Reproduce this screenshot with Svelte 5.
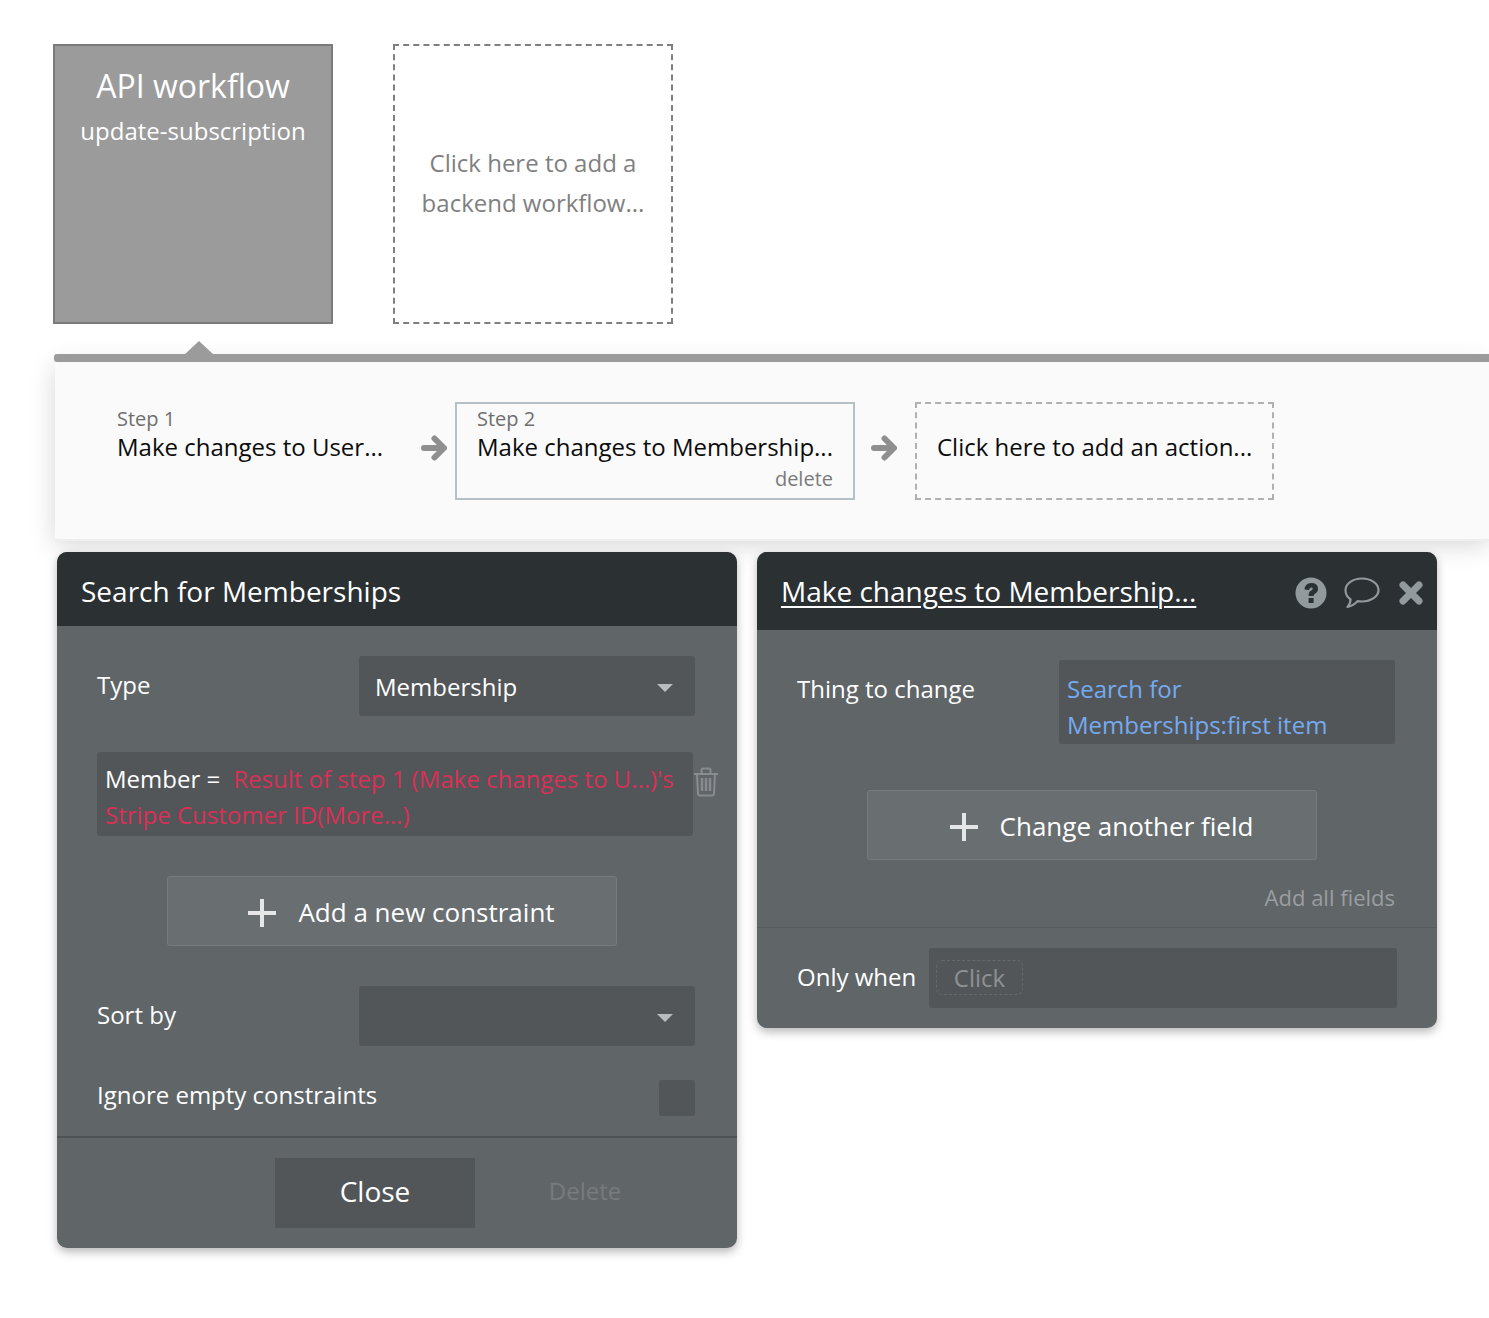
<script>
	const steps = [
		{ id: 1, label: 'Step 1', name: 'Make changes to User...' },
		{ id: 2, label: 'Step 2', name: 'Make changes to Membership...', selected: true }
	];
</script>

{#snippet plus()}
	<svg class="plus" width="28" height="28" viewBox="0 0 28 28"><path d="M12 0h4v12h12v4H16v12h-4V16H0v-4h12z" fill="#e4e6e7" /></svg>
{/snippet}

{#snippet arrow()}
	<svg class="arrow" width="26" height="28" viewBox="0 0 26 28">
		<path d="M3 14H22M13.500 4.500L23 14l-9.500 9.500" fill="none" stroke="#8f8f8f" stroke-width="6" stroke-linecap="round" stroke-linejoin="round" />
	</svg>
{/snippet}

{#snippet caret()}
	<span class="caret"></span>
{/snippet}

<div class="page">
	<div class="cards">
		<div class="card current">
			<div class="card-title">API workflow</div>
			<div class="card-sub">update-subscription</div>
		</div>
		<div class="card add">Click here to add a<br />backend workflow...</div>
	</div>

	<div class="strip">
		<span class="bar"></span>
		<span class="notch"></span>
		{#each steps as s}
			<div class="step" class:selected={s.selected}>
				<div class="step-label">{s.label}</div>
				<div class="step-name">{s.name}</div>
				{#if s.selected}<div class="step-del">delete</div>{/if}
			</div>
			{@render arrow()}
		{/each}
		<div class="step-add">Click here to add an action...</div>
	</div>

	<div class="panels">
		<section class="panel search">
			<header class="head short"><span class="title">Search for Memberships</span></header>
			<div class="row type-row">
				<span class="lbl">Type</span>
				<div class="select">Membership{@render caret()}</div>
			</div>
			<div class="constraint-wrap">
				<div class="constraint">
					<span class="member">Member =</span><span class="red">Result of step 1 (Make changes to U...)'s</span><br />
					<span class="red">Stripe Customer ID(More...)</span>
				</div>
				<svg class="trash" width="26" height="30" viewBox="0 0 26 30" fill="none" stroke="#878c8f" stroke-width="2">
					<path d="M1 7h24M4 7l1 19.500q.2 2 2 2h12q1.800 0 2-2L22 7M8.500 7V3.500q0-2 2-2h5q2 0 2 2V7" />
					<path d="M9 11v13M13 11v13M17 11v13" stroke-width="2.500" />
				</svg>
			</div>
			<button class="add-btn constraint-btn">{@render plus()}<span>Add a new constraint</span></button>
			<div class="row sort-row">
				<span class="lbl">Sort by</span>
				<div class="select">{@render caret()}</div>
			</div>
			<div class="row ignore-row">
				<span class="lbl">Ignore empty constraints</span>
				<span class="check"></span>
			</div>
			<footer class="foot">
				<button class="close">Close</button>
				<span class="delete">Delete</span>
			</footer>
		</section>

		<section class="panel change">
			<header class="head tall">
				<span class="title link">Make changes to Membership...</span>
				<div class="head-icons">
					<svg width="32" height="32" viewBox="0 0 32 32">
						<circle cx="16" cy="16" r="15.500" fill="#929a9d" />
						<path d="M9.500 12.500q.5-6.500 6.800-6.500 6.700 0 6.700 5.800 0 3.400-3 5-1.400.8-1.400 2.200h-5q-.2-3.800 2.300-5.200 1.900-1.100 1.900-2 0-1.300-1.500-1.300-1.700 0-2.200 2.400z" fill="#2b3033" />
						<rect x="13.600" y="21" width="5" height="5" fill="#2b3033" />
					</svg>
					<svg class="bubble" width="36" height="32" viewBox="0 0 36 32">
						<path d="M18 1.500c9 0 16.500 5 16.500 11.500S27 24.500 18 24.500c-1.500 0-3 0-4.500-.4C11 27 8 29 3.500 30c1.800-2 3-4 3-7.800C3 20 1.500 16.800 1.500 13 1.500 6.500 9 1.500 18 1.500z" fill="none" stroke="#929a9d" stroke-width="2.200" stroke-linejoin="round" />
					</svg>
					<svg class="x" width="24" height="24" viewBox="0 0 24 24">
						<path d="M4 4l16 16M20 4L4 20" stroke="#929a9d" stroke-width="7" stroke-linecap="round" />
					</svg>
				</div>
			</header>
			<div class="row thing-row">
				<span class="lbl">Thing to change</span>
				<div class="thing">Search for<br />Memberships:first item</div>
			</div>
			<button class="add-btn field-btn">{@render plus()}<span>Change another field</span></button>
			<div class="add-all">Add all fields</div>
			<div class="only-row">
				<span class="lbl">Only when</span>
				<div class="only"><span class="click">Click</span></div>
			</div>
		</section>
	</div>
</div>

<style>
	:global(body) {
		background: #fff;
	}
	.page {
		height: 1318px;
		box-sizing: border-box;
		padding-top: 44px;
		overflow: hidden;
		font-family: 'Open Sans', 'Noto Sans', sans-serif;
	}
	.cards {
		display: flex;
		gap: 60px;
		margin-left: 53px;
	}
	.card {
		box-sizing: border-box;
		width: 280px;
		height: 280px;
		text-align: center;
	}
	.current {
		background: #9b9b9b;
		border: 2px solid #7b7b7b;
		color: #fff;
		padding-top: 17px;
	}
	.card-title {
		font-size: 32px;
		line-height: 46px;
	}
	.card-sub {
		font-size: 24px;
		line-height: 44px;
	}
	.add {
		border: 2px dashed #7f7f7f;
		display: flex;
		align-items: center;
		justify-content: center;
		color: #808080;
		font-size: 24px;
		line-height: 40px;
		padding-bottom: 2px;
	}
	.strip {
		position: relative;
		box-sizing: border-box;
		height: 179px;
		margin: 38px 0 0 55px;
		padding: 40px 0 0 40px;
		border-bottom: 2px solid #eeeeee;
		border-radius: 0 0 0 3px;
		background: #fafafa;
		box-shadow: 0 4px 26px rgba(0, 0, 0, 0.17);
		display: flex;
		align-items: flex-start;
	}
	.bar {
		position: absolute;
		left: -1px;
		right: 0;
		top: -8px;
		height: 8px;
		background: #9b9b9b;
		border-radius: 3px 0 0 3px;
	}
	.notch {
		position: absolute;
		left: 129px;
		top: -21px;
		width: 0;
		height: 0;
		border-left: 15px solid transparent;
		border-right: 15px solid transparent;
		border-bottom: 14px solid #9b9b9b;
	}
	.step {
		box-sizing: border-box;
		width: 300px;
		height: 98px;
		padding: 2px 20px 0 20px;
		border: 2px solid transparent;
	}
	.step.selected {
		width: 400px;
		border-color: #b5c1c5;
	}
	.step-label {
		font-size: 20px;
		line-height: 26px;
		color: #6f6f6f;
	}
	.step-name {
		font-size: 24px;
		line-height: 30px;
		color: #0c0c0c;
		white-space: nowrap;
	}
	.step-del {
		font-size: 20px;
		line-height: 30px;
		margin-top: 2px;
		color: #7a7a7a;
		text-align: right;
	}
	.arrow {
		flex: none;
		margin: 32px 8px 0 26px;
	}
	.step.selected + .arrow {
		margin: 32px 18px 0 16px;
	}
	.step-add {
		box-sizing: border-box;
		width: 359px;
		height: 98px;
		padding-left: 20px;
		border: 2px dashed #b0b0b0;
		display: flex;
		align-items: center;
		font-size: 24px;
		color: #0c0c0c;
		padding-bottom: 10px;
	}
	.panels {
		position: relative;
		display: flex;
		align-items: flex-start;
		gap: 20px;
		margin: 11px 0 0 57px;
	}
	.panel {
		position: relative;
		box-sizing: border-box;
		width: 680px;
		background: #606568;
		border-radius: 10px;
		box-shadow: 0 4px 10px rgba(0, 0, 0, 0.28);
		color: #fff;
		font-size: 24px;
	}
	.search {
		height: 696px;
	}
	.change {
		height: 476px;
	}
	.head {
		box-sizing: border-box;
		background: #2b3033;
		border-radius: 10px 10px 0 0;
		padding-left: 24px;
		display: flex;
		align-items: center;
	}
	.short {
		height: 74px;
		padding-top: 4px;
	}
	.tall {
		height: 78px;
		padding-bottom: 0;
	}
	.title {
		font-size: 28px;
		line-height: 40px;
	}
	.link {
		text-decoration: underline;
		text-decoration-thickness: 2px;
		text-underline-offset: 4px;
	}
	.head-icons {
		margin-left: auto;
		margin-right: 14px;
		padding-top: 4px;
		display: flex;
		align-items: center;
		gap: 17px;
	}
	.x {
		margin-left: 2px;
	}
	.row {
		display: flex;
		align-items: flex-start;
		padding-left: 40px;
	}
	.lbl {
		font-size: 24px;
		line-height: 32px;
		white-space: nowrap;
	}
	.select {
		position: relative;
		box-sizing: border-box;
		width: 336px;
		height: 60px;
		margin-left: auto;
		margin-right: 42px;
		padding-left: 16px;
		background: #535659;
		border-radius: 3px;
		line-height: 62px;
		font-size: 24px;
	}
	.caret {
		position: absolute;
		right: 22px;
		top: 28px;
		border-left: 8px solid transparent;
		border-right: 8px solid transparent;
		border-top: 8px solid #b9bcbe;
	}
	.type-row {
		padding-top: 30px;
	}
	.type-row .lbl,
	.sort-row .lbl {
		margin-top: 13px;
	}
	.constraint-wrap {
		display: flex;
		align-items: flex-start;
		margin: 36px 0 0 40px;
	}
	.constraint {
		box-sizing: border-box;
		width: 596px;
		height: 84px;
		padding: 9px 0 0 8px;
		background: #535659;
		border-radius: 3px;
		line-height: 36px;
		white-space: nowrap;
	}
	.member {
		margin-right: 13px;
	}
	.red {
		color: #da2f56;
	}
	.trash {
		margin: 15px 0 0 0;
	}
	.add-btn {
		box-sizing: border-box;
		width: 450px;
		height: 70px;
		display: flex;
		align-items: center;
		justify-content: center;
		gap: 22px;
		background: #696e71;
		border: 1px solid #767b7d;
		border-radius: 3px;
		color: #fff;
		font: inherit;
		font-size: 26px;
		padding: 0 0 0 19px;
	}
	.add-btn span {
		position: relative;
		top: 1px;
	}
	.plus {
		position: relative;
		top: 2px;
	}
	.constraint-btn {
		margin: 40px 0 0 110px;
	}
	.sort-row {
		padding-top: 40px;
	}
	.ignore-row {
		padding-top: 34px;
		height: 90px;
		box-sizing: border-box;
	}
	.ignore-row .lbl {
		margin-top: -1px;
	}
	.check {
		width: 36px;
		height: 36px;
		margin-left: auto;
		margin-right: 42px;
		background: #535659;
		border-radius: 2px;
	}
	.foot {
		border-top: 2px solid #4f5254;
		box-sizing: border-box;
		height: 112px;
		padding: 20px 0 0 218px;
		display: flex;
		align-items: flex-start;
	}
	.close {
		width: 200px;
		height: 70px;
		background: #535659;
		border: 0;
		color: #fff;
		font: inherit;
		font-size: 28px;
		padding: 0 0 4px;
	}
	.delete {
		width: 220px;
		text-align: center;
		line-height: 66px;
		font-size: 24px;
		color: #777b7d;
	}
	.thing-row {
		padding-top: 30px;
	}
	.thing-row .lbl {
		margin-top: 13px;
	}
	.thing {
		box-sizing: border-box;
		width: 336px;
		height: 84px;
		margin-left: auto;
		margin-right: 42px;
		padding: 11px 0 0 8px;
		background: #535659;
		border-radius: 2px;
		line-height: 36px;
		color: #74abf0;
		white-space: nowrap;
	}
	.field-btn {
		margin: 46px 0 0 110px;
	}
	.add-all {
		text-align: right;
		margin: 21px 42px 14px 0;
		font-size: 22px;
		line-height: 32px;
		color: #9a9ea0;
	}
	.only-row {
		display: flex;
		align-items: flex-start;
		padding: 20px 40px 0 40px;
		border-top: 1px solid #585c5f;
	}
	.only-row .lbl {
		margin-top: 13px;
	}
	.only {
		box-sizing: border-box;
		width: 468px;
		height: 60px;
		margin-left: auto;
		margin-right: 0;
		padding: 12px 0 0 7px;
		background: #535659;
		border-radius: 2px;
	}
	.click {
		display: block;
		box-sizing: border-box;
		width: 87px;
		height: 35px;
		border: 1px dashed #656a6c;
		border-radius: 6px;
		text-align: center;
		line-height: 33px;
		color: #8e9193;
	}
</style>
